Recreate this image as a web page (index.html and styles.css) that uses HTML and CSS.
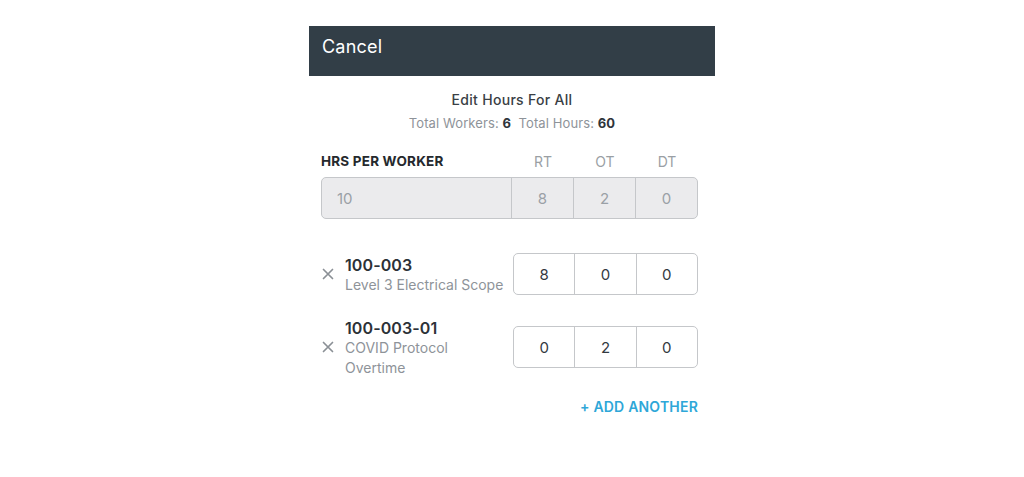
FILE: index.html
```html
<!DOCTYPE html>
<html>
<head>
<meta charset="utf-8">
<link rel="stylesheet" href="styles.css">
</head>
<body>
<div class="sheet">
  <div class="topbar"><span class="cancel">Cancel</span></div>
  <div class="summary">
    <div class="title">Edit Hours For All</div>
    <div class="totals">Total Workers: <b>6</b>&nbsp; Total Hours: <b>60</b></div>
  </div>
  <div class="content">
    <div class="labels">
      <div class="lbl-main">HRS PER WORKER</div>
      <div class="lbl-col">RT</div>
      <div class="lbl-col">OT</div>
      <div class="lbl-col">DT</div>
    </div>
    <div class="group disabled">
      <div class="cell main">10</div>
      <div class="cell">8</div>
      <div class="cell">2</div>
      <div class="cell">0</div>
    </div>

    <div class="row first">
      <div class="x">
        <svg width="12" height="12" viewBox="0 0 12 12"><path d="M1.5 1.5 L10.5 10.5 M10.5 1.5 L1.5 10.5" stroke="#8b9096" stroke-width="1.7" stroke-linecap="round"/></svg>
      </div>
      <div class="info">
        <div class="code">100-003</div>
        <div class="desc">Level 3 Electrical Scope</div>
      </div>
      <div class="group">
        <div class="cell">8</div>
        <div class="cell">0</div>
        <div class="cell">0</div>
      </div>
    </div>

    <div class="row second">
      <div class="x">
        <svg width="12" height="12" viewBox="0 0 12 12"><path d="M1.5 1.5 L10.5 10.5 M10.5 1.5 L1.5 10.5" stroke="#8b9096" stroke-width="1.7" stroke-linecap="round"/></svg>
      </div>
      <div class="info">
        <div class="code">100-003-01</div>
        <div class="desc">COVID Protocol<br>Overtime</div>
      </div>
      <div class="group">
        <div class="cell">0</div>
        <div class="cell">2</div>
        <div class="cell">0</div>
      </div>
    </div>

    <div class="add">+ ADD ANOTHER</div>
  </div>
</div>
</body>
</html>
```
FILE: styles.css
```css
* { box-sizing: border-box; }
html, body { margin: 0; padding: 0; background: #fff; }
body { font-family: Inter, "Liberation Sans", sans-serif; color: #33393f; }

.sheet {
  width: 406px;
  margin: 26px 0 0 309px;
}
.topbar {
  height: 50px;
  background: #323e47;
  display: flex;
  align-items: center;
  padding: 0 0 9px 13px;
}
.cancel { color: #fff; font-size: 18px; letter-spacing: 0.2px; }

.summary { text-align: center; padding-top: 15px; }
.title { font-size: 14px; font-weight: 500; color: #3a3f45; line-height: 18px; letter-spacing: 0.3px; }
.totals { font-size: 13px; color: #8e9399; line-height: 16px; margin-top: 6px; letter-spacing: 0.1px; }
.totals b { color: #2f353b; font-weight: 700; }

.content { padding: 0 17px 0 12px; }

.labels {
  display: flex;
  align-items: center;
  margin-top: 21px;
  height: 18px;
}
.lbl-main { flex: 1; font-size: 13.5px; font-weight: 650; color: #25292d; letter-spacing: 0.2px; }
.lbl-col { width: 62px; text-align: center; font-size: 14px; color: #9a9fa4; }

.group {
  display: flex;
  height: 42px;
  border: 1.5px solid #c5c7ca;
  border-radius: 5px;
  background: #fff;
}
.labels + .group { margin-top: 7px; }
.group.disabled { background: #ebebed; }
.cell {
  width: 62px;
  display: flex;
  align-items: center;
  justify-content: center;
  font-size: 15px;
  color: #33393f;
  border-left: 1.5px solid #c5c7ca;
}
.cell:first-child { border-left: none; }
.group.disabled .cell { color: #9aa0a6; }
.cell.main { flex: 1; justify-content: flex-start; padding-left: 15px; }

.row { display: flex; align-items: center; }
.row .group { width: 185px; }
.row .group .cell { flex: 1; width: auto; }
.row.first { margin-top: 34px; }
.row.second { margin-top: 21px; }
.x { width: 24px; display: flex; align-items: center; padding-left: 1px; }
.info { flex: 1; }
.code { font-size: 16px; font-weight: 600; color: #2c3137; line-height: 20px; letter-spacing: 0.1px; }
.desc { font-size: 14px; color: #8e9399; line-height: 20px; letter-spacing: 0; }
.row.first .info { margin-top: 1px; }
.row.second .info { padding-top: 2px; }

.add {
  text-align: right;
  margin-top: 21px;
  font-size: 14px;
  font-weight: 600;
  color: #2ea7d8;
  letter-spacing: 0.2px;
  line-height: 16px;
}
```
